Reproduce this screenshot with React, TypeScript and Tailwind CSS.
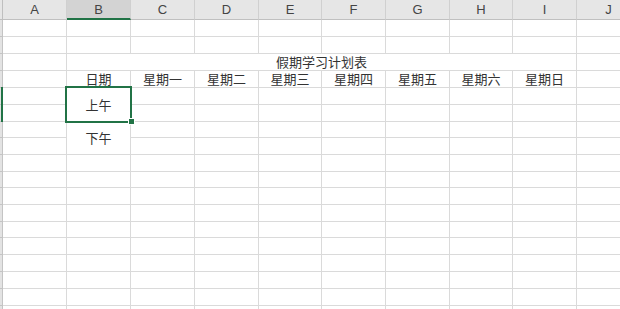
import React from 'react';

const COLS = ['A', 'B', 'C', 'D', 'E', 'F', 'G', 'H', 'I', 'J'];
const WEEK = ['星期一', '星期二', '星期三', '星期四', '星期五', '星期六', '星期日'];
const ROWS = 18;

const cjk = { fontFamily: '"Noto Sans CJK SC", "Noto Sans", sans-serif' };

// one ordinary grid cell
const Cell: React.FC<{ children?: React.ReactNode; className?: string }> = ({ children, className = '' }) => (
  <div className={`border-r border-b border-[#dadada] bg-white text-[13px] text-[#333] flex justify-center items-end leading-[16px] whitespace-nowrap overflow-visible ${className}`} style={cjk}>
    {children}
  </div>
);

function renderRow(r: number) {
  const cells: React.ReactNode[] = [];
  const strip = <div key={`s${r}`} className="bg-[#e3e3e3] border-r border-b border-[#c4c4c4]" />;
  cells.push(strip);

  if (r === 3) {
    cells.push(<Cell key="a">{null}</Cell>);
    cells.push(<Cell key="title" className="col-span-8">假期学习计划表</Cell>);
    cells.push(<Cell key="j">{null}</Cell>);
    return cells;
  }

  COLS.forEach((c, i) => {
    const key = `${c}${r}`;
    if (c === 'B' && (r === 6 || r === 8)) return;
    if (c === 'B' && r === 5) {
      cells.push(<Cell key={key} className="row-span-2 !items-center">上午</Cell>);
      return;
    }
    if (c === 'B' && r === 7) {
      cells.push(<Cell key={key} className="row-span-2 !items-center">下午</Cell>);
      return;
    }
    let text: string | null = null;
    if (r === 4 && c === 'B') text = '日期';
    if (r === 4 && i >= 2 && i <= 8) text = WEEK[i - 2];
    cells.push(<Cell key={key}>{text}</Cell>);
  });
  return cells;
}

export default function App() {
  const rows = Array.from({ length: ROWS }, (_, i) => i + 1);

  return (
    <div className="relative w-[620px] h-[309px] overflow-hidden bg-white">
      <div className="grid grid-cols-[3px_64px_64px_64px_64px_63px_64px_64px_63px_64px_64px] grid-rows-[20px_17px_17px_17px_17px_17px_17px_16px_17px_17px_16px_17px_17px_16px_17px_17px_17px_17px_17px] w-[641px]">
        {/* column header */}
        <div className="bg-[#e6e6e6] border-r border-b border-[#bfbfbf]" />
        {COLS.map(c => (
          <div
            key={c}
            className={`flex items-center justify-center text-[13px] text-[#444] border-r border-[#d0d0d0] ${
              c === 'B' ? 'bg-[#d3d3d3] border-b-2 border-b-[#217346] pt-[2px]' : 'bg-[#e6e6e6] border-b border-b-[#c0c0c0]'
            }`}
            style={{ fontFamily: '"Liberation Sans", Arial, sans-serif' }}
          >
            {c}
          </div>
        ))}
        {rows.map(r => renderRow(r))}
      </div>

      {/* row marker for the selected rows */}
      <div className="absolute left-[1px] top-[87px] w-[2px] h-[35px] bg-[#217346]" />

      {/* selection box B5:B6 */}
      <div className="absolute left-[65px] top-[86px] w-[67px] h-[37px] border-2 border-[#217346]" />
      <div className="absolute left-[128px] top-[118px] w-[7px] h-[7px] bg-[#217346] border border-white" />
    </div>
  );
}
